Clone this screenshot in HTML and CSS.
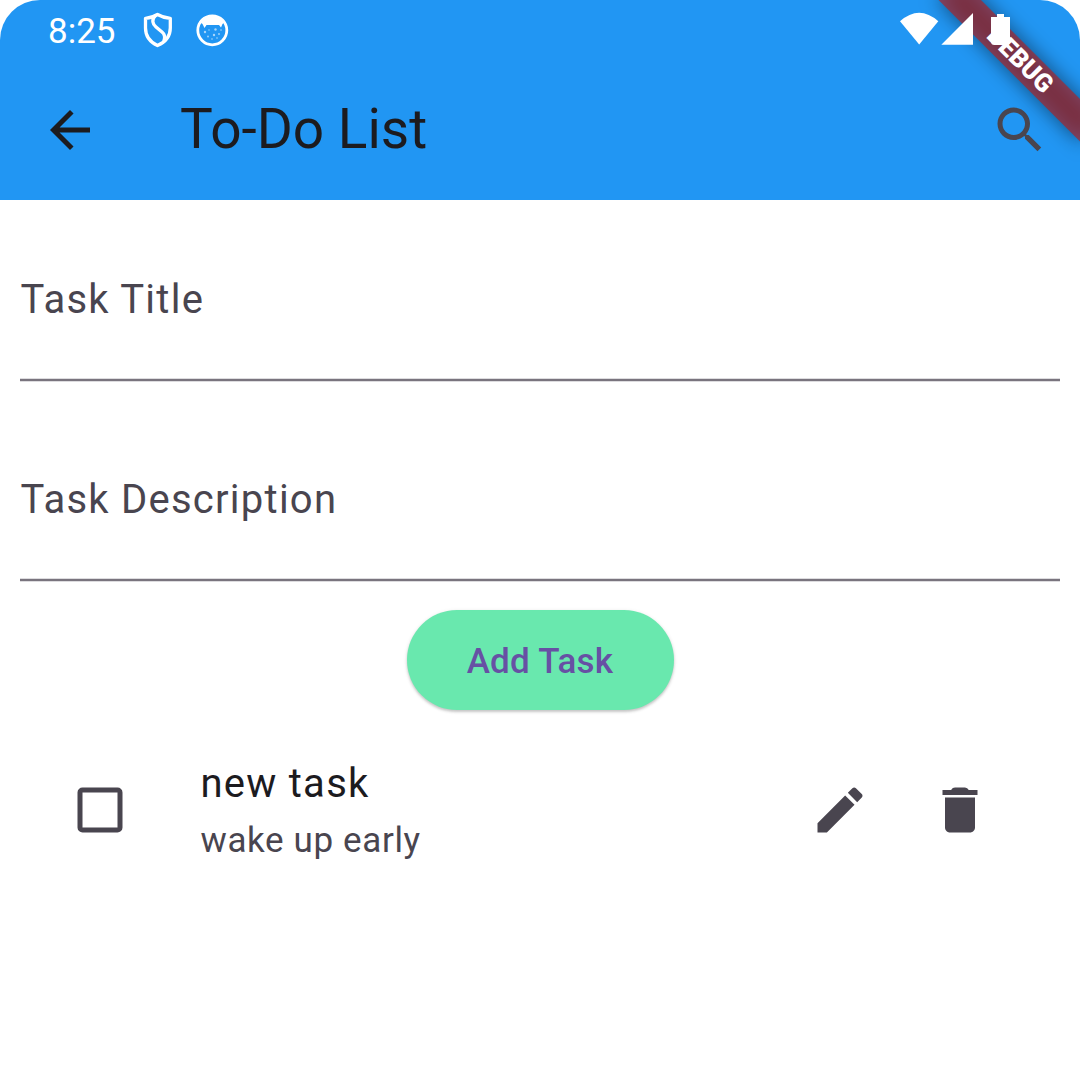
FILE: index.html
```html
<!DOCTYPE html>
<html lang="en">
<head>
<meta charset="utf-8">
<title>To-Do List</title>
<link rel="stylesheet" href="styles.css">
</head>
<body>
<div class="screen">
  <header class="header">
    <div class="status-bar">
      <span class="clock">8:25</span>
      <svg class="shield" viewBox="0 0 30 36" width="30" height="36" fill="none" stroke="#fff" stroke-width="3.300" stroke-linejoin="round" stroke-linecap="round">
        <path d="M14.500 2.500 C11 4.800 6.500 6 2.500 6.300 V16 C2.500 24.500 8 30.500 14.500 33.500 C21.500 30.500 27.300 24.500 27.300 16 V6.300 C23 6 18.500 4.800 14.500 2.500Z"/>
        <path d="M12 4 C8.500 7.500 9.500 12 13 15 L19 20 C22 22.500 22.300 25 21 28.500"/>
      </svg>
      <svg class="cat" viewBox="0 0 34 34" width="34" height="34">
        <circle cx="17.300" cy="17.300" r="14.500" fill="none" stroke="#fff" stroke-width="2.800"/>
        <path fill="#fff" d="M4.500 9 C10 0 24 0 30 9 L27.500 11 L26 14.500 L24 12 H11.500 L9.500 15 L7.500 11Z"/>
        <g fill="#fff" opacity=".6"><circle cx="10" cy="19" r="1.200"/><circle cx="20.500" cy="16.500" r="1.200"/><circle cx="14" cy="17" r=".7"/><circle cx="24" cy="21" r=".9"/><circle cx="19" cy="22" r="1.200"/><circle cx="13" cy="23.500" r=".9"/><circle cx="17" cy="26" r=".8"/><circle cx="22" cy="25" r=".8"/><circle cx="26" cy="17" r=".8"/></g>
      </svg>
    </div>
    <div class="app-bar">
      <svg class="icon dark" viewBox="0 0 24 24"><path d="M20 11H7.830l5.590-5.590L12 4l-8 8 8 8 1.410-1.410L7.830 13H20v-2z"/></svg>
      <h1 class="title">To-Do List</h1>
      <svg class="icon" viewBox="0 0 24 24"><path d="M15.500 14h-.79l-.28-.27C15.410 12.590 16 11.110 16 9.500 16 5.910 13.090 3 9.500 3S3 5.910 3 9.500 5.910 16 9.500 16c1.610 0 3.090-.59 4.230-1.570l.27.28v.79l5 4.990L20.490 19l-4.990-5zm-6 0C7.010 14 5 11.990 5 9.500S7.010 5 9.500 5 14 7.010 14 9.500 11.990 14 9.500 14z"/></svg>
    </div>
    <div class="banner-layer">
      <div class="banner-shadow"></div>
      <div class="banner">DEBUG</div>
    </div>
    <svg class="signals" viewBox="0 0 120 40" width="120" height="40" fill="#fff">
      <path d="M0 11.300 Q19.200-5.700 38.300 11.300 L19.200 34.500Z"/>
      <path d="M73 3 V34.700 H41.300Z"/>
      <path d="M97 4 h7 v3 h6 v24.500 q0 3.500-3.500 3.500 h-12 q-3.500 0-3.500-3.500 v-24.500 h6z"/>
    </svg>
  </header>
  <main class="content">
    <div class="field">Task Title</div>
    <div class="field">Task Description</div>
    <button class="add">Add Task</button>
    <div class="task">
      <svg class="checkbox" viewBox="0 0 60 60"><rect x="10" y="10" width="40" height="40" rx="2.500"/></svg>
      <div class="task-text">
        <div class="task-title">new task</div>
        <div class="task-note">wake up early</div>
      </div>
      <svg class="icon" viewBox="0 0 24 24"><path d="M3 17.250V21h3.750L17.810 9.940l-3.750-3.750L3 17.250zM20.710 7.040c.39-.39.39-1.020 0-1.410l-2.340-2.340c-.39-.39-1.020-.39-1.410 0l-1.830 1.830 3.750 3.750 1.830-1.830z"/></svg>
      <svg class="icon" viewBox="0 0 24 24"><path d="M6 19c0 1.100.9 2 2 2h8c1.100 0 2-.9 2-2V7H6v12zM8.500 3.900Q9 3 10 3h4q1 0 1.500 1H19v2H5V4h3.500z"/></svg>
    </div>
  </main>
</div>
</body>
</html>
```
FILE: styles.css
```css
* { box-sizing: border-box; }
body { margin: 0; background: #fff; font-family: Roboto, sans-serif; }
.screen { width: 1080px; height: 1084px; overflow: hidden; background: #fff; color: #49454f; }
.header { position: relative; height: 200px; background: #2196f3; border-radius: 40px 40px 0 0; overflow: hidden; }
.status-bar { height: 60px; padding: 0 48px; display: flex; align-items: center; color: #fff; }
.clock { font-size: 35px; line-height: 60px; width: 95px; padding-top: 4px; }
.cat { margin-left: 22px; }
.app-bar { height: 140px; padding: 0 30px 0 40px; display: flex; align-items: center; }
.icon { width: 60px; height: 60px; fill: #49454f; flex: none; }
.dark { fill: #1c1b1f; }
.title { flex: 1; margin: 0; padding: 0 0 2px 80px; font-size: 55px; font-weight: 400; line-height: 70px; color: #1c1b1f; }
.banner-layer { position: absolute; top: 0; right: 0; width: 0; height: 0; transform: rotate(45deg); }
.banner, .banner-shadow { position: absolute; left: -100px; top: 70px; width: 200px; height: 30px; }
.banner-shadow { background: rgba(0, 0, 0, .5); filter: blur(9.9px); }
.banner { background: rgba(183, 28, 28, .627); color: #fff; font-size: 25.5px; line-height: 28px; font-weight: 900; text-align: center; }
.signals { position: absolute; left: 900px; top: 10px; }
.content { padding: 0 20px; display: flex; flex-direction: column; }
.field { height: 181px; border-bottom: 2px solid #79747e; box-shadow: 0 1px 0 rgba(121, 116, 126, .25), inset 0 -1px 0 rgba(121, 116, 126, .25); padding: 70px 0 0 .5px; font-size: 40px; line-height: 60px; letter-spacing: 1.25px; }
.field + .field { height: 200px; padding-top: 89px; }
.add { align-self: center; margin: 29px 0 0; padding: 3px 0 0; width: 267px; height: 100px; border: 0; border-radius: 50px; background: #69e8ae; color: #6750a4; font: 500 35px/50px Roboto, sans-serif; letter-spacing: .25px; box-shadow: 0 2px 2.5px rgba(0, 0, 0, .17), 0 1px 4px rgba(0, 0, 0, .1); }
.task { height: 200px; padding: 0 70px 0 50px; display: flex; align-items: center; }
.checkbox { width: 60px; height: 60px; flex: none; fill: none; stroke: #49454f; stroke-width: 5px; }
.task-text { flex: 1; padding-left: 70.5px; }
.task-title { font-size: 40px; line-height: 60px; letter-spacing: 1.25px; color: #1c1b1f; }
.task-note { font-size: 35px; line-height: 50px; letter-spacing: .625px; padding-top: 2px; }
.task .icon + .icon { margin-left: 60px; }
```
